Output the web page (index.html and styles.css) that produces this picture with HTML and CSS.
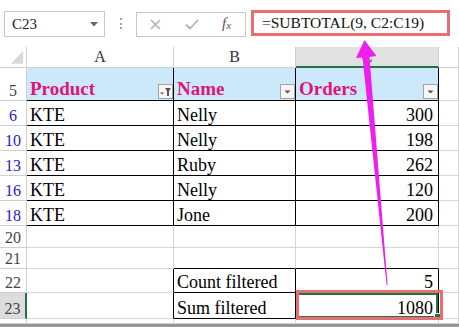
FILE: index.html
```html
<!DOCTYPE html>
<html>
<head>
<meta charset="utf-8">
<link rel="stylesheet" href="styles.css">
</head>
<body>
<div class="toolbar">
  <div class="namebox"><span>C23</span><svg class="caret" width="8" height="5" viewBox="0 0 8 5"><polygon points="0,0 8,0 4,4.5" fill="#666"/></svg></div>
  <div class="dots"><i></i><i></i><i></i></div>
  <div class="fxbox">
    <svg class="ic-x" width="11" height="11" viewBox="0 0 11 11"><path d="M1 1 L10 10 M10 1 L1 10" stroke="#b4b4b4" stroke-width="1.6" fill="none"/></svg>
    <svg class="ic-ok" width="14" height="11" viewBox="0 0 14 11"><path d="M1 5.5 L5 9.5 L13 1" stroke="#b4b4b4" stroke-width="1.8" fill="none"/></svg>
    <span class="fx">f<sub>x</sub></span>
  </div>
  <div class="formula">=SUBTOTAL(9, C2:C19)</div>
</div>

<div class="sheet">
  <div class="c corner"><svg width="27" height="21" viewBox="0 0 27 21"><polygon points="24,5 24,18 11,18" fill="#d9d9d9"/></svg></div>
  <div class="c ch">A</div>
  <div class="c ch">B</div>
  <div class="c ch sel">C</div>
  <div class="c ch"></div>

  <div class="c rh">5</div>
  <div class="c t hd"><span>Product</span><svg class="btn" width="15" height="15" viewBox="0 0 15 15"><rect x="0.5" y="0.5" width="14" height="14" fill="#f6f6f6" stroke="#a3a3a3"/><polygon points="2,8.5 6,8.5 4,10.5" fill="#555"/><polygon points="7,4 13,4 11,7 11,12 9,12 9,7" fill="#555"/></svg></div>
  <div class="c t hd"><span>Name</span><svg class="btn" width="15" height="15" viewBox="0 0 15 15"><rect x="0.5" y="0.5" width="14" height="14" fill="#f6f6f6" stroke="#a3a3a3"/><polygon points="4.5,6.5 10.5,6.5 7.5,9.5" fill="#555"/></svg></div>
  <div class="c t hd"><span>Orders</span><svg class="btn" width="15" height="15" viewBox="0 0 15 15"><rect x="0.5" y="0.5" width="14" height="14" fill="#f6f6f6" stroke="#a3a3a3"/><polygon points="4.5,6.5 10.5,6.5 7.5,9.5" fill="#555"/></svg></div>
  <div class="c"></div>

  <div class="c rh f">6</div><div class="c t">KTE</div><div class="c t">Nelly</div><div class="c t num">300</div><div class="c"></div>
  <div class="c rh f">10</div><div class="c t">KTE</div><div class="c t">Nelly</div><div class="c t num">198</div><div class="c"></div>
  <div class="c rh f">13</div><div class="c t">KTE</div><div class="c t">Ruby</div><div class="c t num">262</div><div class="c"></div>
  <div class="c rh f">16</div><div class="c t">KTE</div><div class="c t">Nelly</div><div class="c t num">120</div><div class="c"></div>
  <div class="c rh f">18</div><div class="c t">KTE</div><div class="c t">Jone</div><div class="c t num">200</div><div class="c"></div>

  <div class="c rh">20</div><div class="c"></div><div class="c"></div><div class="c"></div><div class="c"></div>
  <div class="c rh">21</div><div class="c"></div><div class="c tb"></div><div class="c tb"></div><div class="c"></div>
  <div class="c rh">22</div><div class="c tr"></div><div class="c t">Count filtered</div><div class="c t num">5</div><div class="c"></div>
  <div class="c rh sel">23</div><div class="c tr"></div><div class="c t">Sum filtered</div><div class="c t num active">1080</div><div class="c"></div>
  <div class="c rh"></div><div class="c"></div><div class="c"></div><div class="c"></div><div class="c"></div>
</div>
<div class="hscroll"></div>

<div class="redbox"></div>
<svg class="arrow" width="459" height="327" viewBox="0 0 459 327">
  <polygon points="364.5,40 376.5,56 369.5,57 387.6,285 386.6,285 362.5,57.5 356,58" fill="#ee1eee"/>
</svg>
</body>
</html>
```

FILE: styles.css
```css
* { box-sizing: border-box; }
html, body { margin: 0; padding: 0; }
body {
  width: 459px;
  height: 327px;
  overflow: hidden;
  position: relative;
  background: #fff;
  font-family: "Liberation Serif", "Times New Roman", serif;
  color: #000;
}

.toolbar {
  height: 47px;
  display: flex;
  align-items: flex-start;
  padding-top: 10px;
}
.namebox {
  margin-left: 4px;
  margin-top: 1px;
  width: 101px;
  height: 26px;
  border: 1px solid #c6c6c6;
  display: flex;
  align-items: center;
  justify-content: space-between;
  padding: 0 6px 0 7px;
  font-size: 15px;
  color: #222;
}
.caret { margin-top: 1px; }
.dots {
  width: 31px;
  margin-top: 8px;
  display: flex;
  flex-direction: column;
  align-items: center;
  gap: 2.5px;
}
.dots i {
  display: block;
  width: 2px;
  height: 2px;
  background: #a8a8a8;
}
.fxbox {
  margin-top: 2px;
  width: 110px;
  height: 25px;
  border: 1px solid #c6c6c6;
  display: flex;
  align-items: center;
  padding-left: 13px;
}
.ic-x { margin-right: 24px; }
.ic-ok { margin-right: 23px; }
.fx {
  font-style: italic;
  font-size: 15px;
  color: #555;
  line-height: 15px;
}
.fx sub { font-size: 11px; vertical-align: -1px; }
.formula {
  margin-left: 5px;
  width: 199px;
  height: 26px;
  border: 3px solid #e96e72;
  display: flex;
  align-items: center;
  padding-left: 8px;
  font-size: 15.5px;
  color: #111;
  white-space: nowrap;
}

.sheet {
  display: grid;
  grid-template-columns: 27px 147px 122px 143px 20px;
  grid-template-rows: 21px 33px repeat(5, 25px) 22px 21px 24px 26px 5px;
}
.c {
  border-right: 1px solid #d4d4d4;
  border-bottom: 1px solid #d4d4d4;
  display: flex;
  align-items: flex-end;
  padding: 0 4px 0 3px;
  font-size: 18px;
  line-height: 20px;
  white-space: nowrap;
  overflow: hidden;
  position: relative;
}
.corner { padding: 0; border-color: #cfcfcf; }
.ch {
  justify-content: center;
  align-items: center;
  font-size: 16px;
  line-height: 18px;
  color: #333;
  border-color: #cfcfcf;
  padding: 0;
}
.ch.sel {
  background: #e1e1e1;
  border-bottom: 2px solid #217346;
}
.rh {
  justify-content: center;
  font-size: 16px;
  line-height: 18px;
  color: #444;
  padding: 0;
  border-color: #cfcfcf;
}
.rh.f { color: #2323c4; }
.rh.sel {
  background: #dcdcdc;
  border-right: 2px solid #217346;
}
.t { border-right-color: #000; border-bottom-color: #000; }
.tb { border-bottom-color: #000; }
.tr { border-right-color: #000; }
.hd {
  background: #cce8fb;
  font-weight: bold;
  color: #e0147a;
  font-size: 19px;
  padding-right: 0;
  padding-bottom: 1px;
}
.hd .btn { margin-left: auto; flex: none; }
.num { justify-content: flex-end; padding-right: 5px; }
.active { box-shadow: inset 0 0 0 2px #217346; overflow: visible; }
.active::after {
  content: "";
  position: absolute;
  right: -3px;
  bottom: -2px;
  width: 5px;
  height: 5px;
  background: #217346;
  border: 1px solid #fff;
}

.hscroll {
  height: 8px;
  background: linear-gradient(#8e8e8e, #b8b8b8);
}

.redbox {
  position: absolute;
  left: 296px;
  top: 290px;
  width: 147px;
  height: 30px;
  border: 3px solid #e96e72;
}
.arrow {
  position: absolute;
  left: 0;
  top: 0;
  pointer-events: none;
}
```
